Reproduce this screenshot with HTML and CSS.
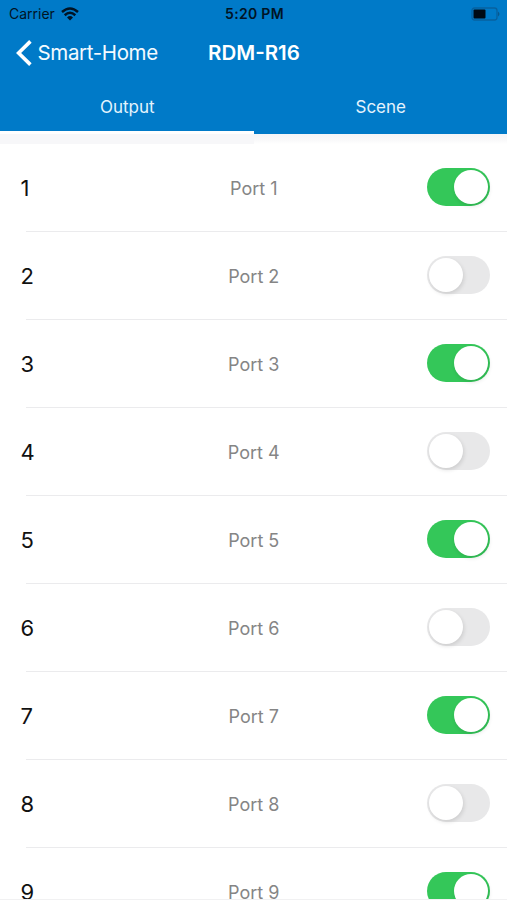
FILE: index.html
```html
<!DOCTYPE html>
<html lang="en">
<head>
<meta charset="utf-8">
<title>RDM-R16</title>
<link rel="stylesheet" href="styles.css">
</head>
<body>
<div class="screen">
  <header class="header">
    <div class="status">
      <div class="carrier"><span>Carrier</span>
        <svg class="wifi" width="18" height="14" viewBox="0 0 18 14" fill="none" stroke="#001425" stroke-width="2.5"><path d="M1 5Q9-2 17 5M3.7 8.2Q9 3.4 14.3 8.2"/><path d="M6 10.4Q9 7.8 12 10.4L9 13.5Z" fill="#001425" stroke="none"/></svg>
      </div>
      <div class="time">5:20 PM</div>
      <svg class="battery" width="29" height="14" viewBox="0 0 29 14"><rect x="1" y="1" width="25" height="12" rx="2.5" fill="none" stroke="#07619f" stroke-width="1.3"/><rect x="2.5" y="2.5" width="12" height="9" rx="1" fill="#000a14"/><path d="M27 4.5Q30 7 27 9.5Z" fill="#07578e"/></svg>
    </div>
    <nav class="navbar">
      <div class="back"><svg width="18" height="28" viewBox="0 0 18 28" fill="none" stroke="#fff" stroke-width="3.6"><path d="M15.4 2.4L3.6 14L15.4 25.6"/></svg><span>Smart-Home</span></div>
      <h1 class="title">RDM-R16</h1>
    </nav>
    <div class="tabs"><div class="tab active"><span>Output</span></div><div class="tab"><span>Scene</span></div></div>
  </header>
  <div class="strip"><div class="strip-active"></div><div class="strip-rest"></div></div>
  <main class="list">
    <div class="row"><span class="num">1</span><span class="port">Port 1</span><span class="switch on"><i></i></span></div>
    <div class="row"><span class="num">2</span><span class="port">Port 2</span><span class="switch"><i></i></span></div>
    <div class="row"><span class="num">3</span><span class="port">Port 3</span><span class="switch on"><i></i></span></div>
    <div class="row"><span class="num">4</span><span class="port">Port 4</span><span class="switch"><i></i></span></div>
    <div class="row"><span class="num">5</span><span class="port">Port 5</span><span class="switch on"><i></i></span></div>
    <div class="row"><span class="num">6</span><span class="port">Port 6</span><span class="switch"><i></i></span></div>
    <div class="row"><span class="num">7</span><span class="port">Port 7</span><span class="switch on"><i></i></span></div>
    <div class="row"><span class="num">8</span><span class="port">Port 8</span><span class="switch"><i></i></span></div>
    <div class="row"><span class="num">9</span><span class="port">Port 9</span><span class="switch on"><i></i></span></div>
  </main>
  <div class="edge"></div>
</div>
</body>
</html>
```

FILE: styles.css
```css
* { box-sizing: border-box; }
body {
  margin: 0;
  background: #fff;
  font-family: Inter, "Liberation Sans", sans-serif;
}
.screen {
  width: 507px;
  height: 900px;
  overflow: hidden;
  display: flex;
  flex-direction: column;
}
.header {
  flex: none;
  height: 131px;
  background: #007ac8;
  color: #fff;
}
.status {
  height: 27px;
  padding: 0 7px 0 9px;
  display: grid;
  grid-template-columns: 1fr auto 1fr;
  align-items: center;
  color: #001425;
}
.carrier {
  display: flex;
  align-items: center;
  gap: 6px;
  font-size: 14px;
}
.time {
  font-size: 14px;
  font-weight: 600;
  letter-spacing: 0.3px;
}
.battery { justify-self: end; }
.navbar {
  height: 51px;
  padding: 0 14px 0 15px;
  display: grid;
  grid-template-columns: 1fr auto 1fr;
  align-items: center;
}
.back {
  display: flex;
  align-items: center;
  gap: 4.5px;
  font-size: 20.5px;
  letter-spacing: -0.35px;
  white-space: nowrap;
  color: #f4faff;
}
.title {
  margin: 0;
  font-size: 20.5px;
  font-weight: 600;
}
.tabs {
  display: grid;
  grid-template-columns: 1fr 1fr;
  height: 53px;
}
.tab {
  padding: 19px 0 0 1px;
  text-align: center;
  font-size: 17px;
  line-height: 21px;
  color: #e4f3fd;
}
.strip {
  flex: none;
  height: 13px;
  display: grid;
  grid-template-columns: 254px 1fr;
}
.strip-active {
  border-top: 3px solid #fff;
  background: #f7f7f9;
}
.strip-rest {
  border-top: 3px solid #007ac8;
  background: linear-gradient(#f5f5f7, #fafafb 70%, #fff);
}
.list {
  height: 755px;
  overflow: hidden;
}
.row {
  height: 88px;
  padding: 0 17px 0 20.5px;
  display: grid;
  grid-template-columns: 1fr auto 1fr;
  align-items: center;
  background: linear-gradient(#ebebed, #ebebed) 26px 87px / 100% 1.5px no-repeat;
}
.num {
  font-size: 22px;
  color: #111;
}
.port {
  margin: 0 2px 0 -1px;
  font-size: 18px;
  color: #858585;
}
.switch {
  justify-self: end;
  width: 63px;
  height: 38px;
  margin-bottom: 2px;
  padding: 2px;
  border-radius: 19px;
  background: #e8e8e9;
  display: flex;
}
.switch i {
  width: 34px;
  height: 34px;
  border-radius: 50%;
  background: #fff;
  box-shadow: 1px 2px 4px rgba(0, 0, 0, 0.12);
}
.switch.on {
  background: #34c759;
  justify-content: flex-end;
}
.edge {
  flex: none;
  height: 1px;
  background: #f1f1f2;
}
```
